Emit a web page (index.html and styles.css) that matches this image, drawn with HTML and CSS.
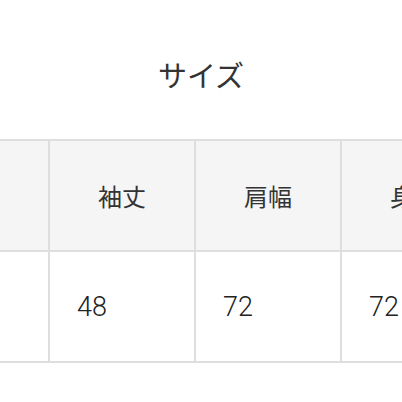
FILE: index.html
```html
<!DOCTYPE html>
<html lang="ja">
<head>
<meta charset="utf-8">
<link rel="stylesheet" href="styles.css">
</head>
<body>
<div class="title">サイズ</div>
<div class="table">
  <div class="row head">
    <div class="cell first"></div>
    <div class="cell">袖丈</div>
    <div class="cell">肩幅</div>
    <div class="cell">身幅</div>
  </div>
  <div class="row body">
    <div class="cell first"></div>
    <div class="cell">48</div>
    <div class="cell">72</div>
    <div class="cell">72</div>
  </div>
</div>
</body>
</html>
```
FILE: styles.css
```css
html, body {
  margin: 0;
  padding: 0;
  background: #fff;
  overflow: hidden;
}
body {
  font-family: Roboto, "Noto Sans CJK JP", sans-serif;
  color: #333;
}
.title {
  height: 139px;
  box-sizing: border-box;
  padding-top: 54px;
  line-height: 40px;
  text-align: center;
  font-size: 29px;
  font-family: "Noto Sans CJK JP", sans-serif;
}
.table {
  border-top: 2px solid #dedede;
  width: 600px;
}
.row {
  display: flex;
  height: 109px;
  border-bottom: 2px solid #dedede;
}
.head {
  background: #f5f5f5;
}
.cell {
  flex: none;
  width: 144px;
  border-right: 2px solid #dedede;
  display: flex;
  align-items: center;
}
.cell.first {
  width: 48px;
}
.head .cell {
  justify-content: center;
  font-size: 24px;
  font-family: "Noto Sans CJK JP", sans-serif;
}
.body .cell {
  padding-left: 27px;
  box-sizing: content-box;
  width: 117px;
  font-size: 27px;
  font-weight: 300;
  color: #222;
}
.body .cell.first {
  padding-left: 0;
  width: 48px;
}
```
